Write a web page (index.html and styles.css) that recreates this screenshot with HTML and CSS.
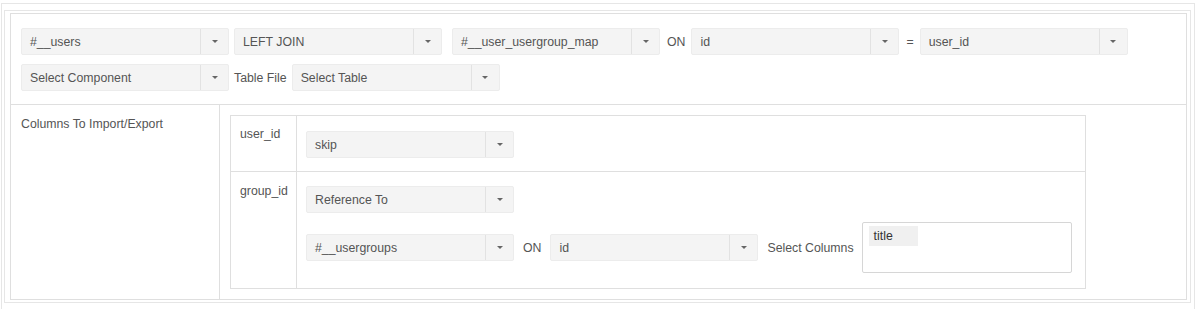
FILE: index.html
```html
<!DOCTYPE html>
<html>
    <head>
        <meta charset="UTF-8">
        <meta name="viewport" content="width=device-width, initial-scale=1.0">
        <title>Import / Export Mapping</title>
        <link rel="stylesheet" href="styles.css">
    </head>

    <body>
        <div class="frame">
            <div class="panel">
                <div class="grid">
                    <div class="joins">
                        <div class="line">
                            <div class="select"><span class="value">#__users</span><span class="caret"></span></div>
                            <div class="select join-type"><span class="value">LEFT JOIN</span><span class="caret"></span></div>
                            <div class="select"><span class="value">#__user_usergroup_map</span><span class="caret"></span></div>
                            <span class="op">ON</span>
                            <div class="select"><span class="value">id</span><span class="caret"></span></div>
                            <span class="op">=</span>
                            <div class="select"><span class="value">user_id</span><span class="caret"></span></div>
                        </div>
                        <div class="line">
                            <div class="select"><span class="value">Select Component</span><span class="caret"></span></div>
                            <span class="label">Table File</span>
                            <div class="select"><span class="value">Select Table</span><span class="caret"></span></div>
                        </div>
                    </div>

                    <div class="map">
                        <div class="map-label">Columns To Import/Export</div>
                        <div class="map-body">
                            <div class="cols">
                                <div class="col-row">
                                    <div class="col-name">user_id</div>
                                    <div class="col-opts">
                                        <div class="select"><span class="value">skip</span><span class="caret"></span></div>
                                    </div>
                                </div>
                                <div class="col-row">
                                    <div class="col-name">group_id</div>
                                    <div class="col-opts">
                                        <div class="select"><span class="value">Reference To</span><span class="caret"></span></div>
                                        <div class="ref-line">
                                            <div class="select"><span class="value">#__usergroups</span><span class="caret"></span></div>
                                            <span class="label">ON</span>
                                            <div class="select"><span class="value">id</span><span class="caret"></span></div>
                                            <span class="label">Select Columns</span>
                                            <div class="picker">
                                                <span class="chip">title</span>
                                            </div>
                                        </div>
                                    </div>
                                </div>
                            </div>
                        </div>
                    </div>
                </div>
            </div>
        </div>
    </body>
</html>
```

FILE: styles.css
```css
* {
    box-sizing: border-box;
}
body {
    margin: 0;
    background-color: white;
    color: #555;
    font-family: "Liberation Sans", Arial, sans-serif;
    font-size: 12.3px;
    line-height: 18px;
}
.frame {
    margin: 3px 0 0 1px;
    width: 1194px;
    min-height: 320px;
    padding: 6px 3px 0 2px;
    border: 1px solid #e6e6e6;
    border-bottom: none;
}
.panel {
    width: 1187px;
    padding: 2px 3px 2px 5px;
    border: 1px solid #e6e6e6;
}
.grid {
    border: 1px solid #dfdfdf;
}

/* join lines */
.joins {
    display: flex;
    flex-direction: column;
    gap: 9px;
    padding: 14px 10px 13px;
    border-bottom: 1px solid #dfdfdf;
}
.line {
    display: flex;
    align-items: center;
    gap: 5px;
}
.op {
    margin: 0 1px 0 2px;
}
.join-type {
    margin-right: 5px;
}

/* select look-alike */
.select {
    display: flex;
    flex: none;
    width: 208px;
    height: 27px;
    background-color: #f4f4f4;
    border: 1px solid #ececec;
    border-radius: 2px;
}
.select .value {
    flex: 1;
    padding: 4px 8px;
    white-space: nowrap;
    overflow: hidden;
}
.select .caret {
    width: 28px;
    border-left: 1px solid #e2e2e2;
    display: flex;
    align-items: center;
    justify-content: center;
}
.select .caret::after {
    content: "";
    border-left: 3px solid transparent;
    border-right: 3px solid transparent;
    border-top: 3px solid #666;
}

/* columns map */
.map {
    display: flex;
}
.map-label {
    width: 209px;
    padding: 10px 10px;
    border-right: 1px solid #dfdfdf;
}
.map-body {
    padding: 10px;
}
.cols {
    width: 856px;
    border: 1px solid #dfdfdf;
}
.col-row {
    display: flex;
}
.col-row + .col-row {
    border-top: 1px solid #dfdfdf;
}
.col-name {
    width: 66px;
    padding: 9px 0 0 9px;
    border-right: 1px solid #dfdfdf;
}
.col-opts {
    flex: 1;
    padding: 15px 9px 13px;
}
.col-row + .col-row .col-name {
    padding-top: 10px;
}
.col-row + .col-row .col-opts {
    padding-top: 14px;
    padding-bottom: 15px;
}
.ref-line {
    display: flex;
    align-items: center;
    gap: 9px;
    margin-top: 9px;
}
.ref-line .label {
    white-space: nowrap;
}
.picker {
    width: 210px;
    height: 51px;
    margin-left: -1px;
    padding: 3px 6px;
    border: 1px solid #d6d6d6;
    border-radius: 2px;
}
.chip {
    display: inline-block;
    width: 49px;
    height: 20px;
    padding: 1px 5px;
    background-color: #f0f0f0;
    color: #333;
}
```
